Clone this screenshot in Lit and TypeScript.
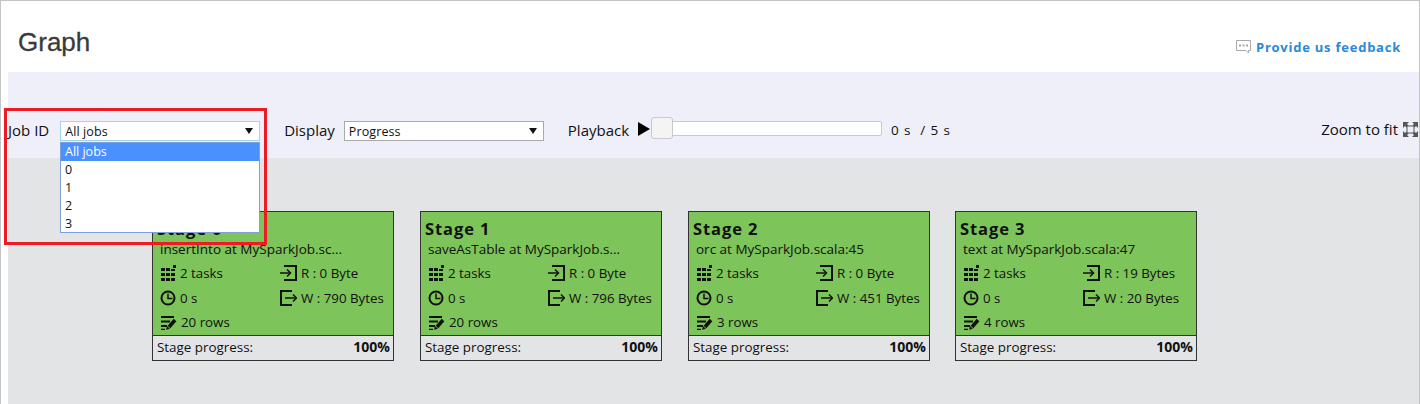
import { LitElement, html, css, svg } from 'lit';
import { customElement } from 'lit/decorators.js';
import { map } from 'lit/directives/map.js';

type Stage = { name: string; op: string; tasks: string; read: string; write: string; time: string; rows: string };

const stages: Stage[] = [
  { name: 'Stage 0', op: 'insertInto at MySparkJob.sc...', tasks: '2 tasks', read: 'R : 0 Byte', write: 'W : 790 Bytes', time: '0 s', rows: '20 rows' },
  { name: 'Stage 1', op: 'saveAsTable at MySparkJob.s...', tasks: '2 tasks', read: 'R : 0 Byte', write: 'W : 796 Bytes', time: '0 s', rows: '20 rows' },
  { name: 'Stage 2', op: 'orc at MySparkJob.scala:45', tasks: '2 tasks', read: 'R : 0 Byte', write: 'W : 451 Bytes', time: '0 s', rows: '3 rows' },
  { name: 'Stage 3', op: 'text at MySparkJob.scala:47', tasks: '2 tasks', read: 'R : 19 Bytes', write: 'W : 20 Bytes', time: '0 s', rows: '4 rows' },
];

const tasksIcon = svg`<svg class="icon" width="16" height="16" viewBox="0 0 16 16" fill="#111">
  <rect x="1" y="3" width="4" height="3"/><rect x="6" y="3" width="4" height="3"/><rect x="11" y="4" width="4" height="2"/>
  <rect x="1" y="8" width="4" height="3"/><rect x="6" y="8" width="4" height="3"/><rect x="11" y="8" width="4" height="3"/>
  <rect x="1" y="13" width="4" height="3"/><rect x="6" y="13" width="4" height="3"/><rect x="11" y="13" width="4" height="3"/>
  <rect x="13" y="0" width="3" height="3"/></svg>`;
const clockIcon = svg`<svg class="icon" width="16" height="16" viewBox="0 0 16 16" fill="none" stroke="#111">
  <circle cx="8" cy="8" r="6.500" stroke-width="2"/><path d="M8 3.500V8.500H12.500" stroke-width="1.500"/></svg>`;
const rowsIcon = svg`<svg class="icon" width="17" height="16" viewBox="0 0 17 16" fill="none" stroke="#111" stroke-width="2">
  <path d="M1 3H14M1 7.500H10M1 12H7"/><path d="M1 15.500H5" stroke-width="1.500"/><path d="M9 13L15 6" stroke-width="3.500"/><path d="M6.500 15.500L7 12.500L9.500 14.500Z" fill="#111" stroke-width="0.500"/></svg>`;
const readIcon = svg`<svg class="icon" width="17" height="16" viewBox="0 0 17 16" fill="none" stroke="#111" stroke-width="2">
  <path d="M4 1H16V15H4"/><path d="M0 8H10" stroke-width="1.500"/><path d="M7 4.500L10.500 8L7 11.500" stroke-width="1.500"/></svg>`;
const writeIcon = svg`<svg class="icon" width="17" height="16" viewBox="0 0 17 16" fill="none" stroke="#111" stroke-width="2">
  <path d="M12 1H1V15H12"/><path d="M5 8H16" stroke-width="1.500"/><path d="M13 4.500L16.500 8L13 11.500" stroke-width="1.500"/></svg>`;

@customElement('app-root')
export class AppRoot extends LitElement {
  static styles = css`
    :host {
      display: block;
      position: relative;
      height: 404px;
      box-sizing: border-box;
      overflow: hidden;
      border: 1px solid #c4c4c4;
      border-bottom: none;
      background: #fff;
      font-family: 'Open Sans', 'Noto Sans', sans-serif;
      color: #111;
    }
    .header {
      height: 71px;
      display: flex;
      justify-content: space-between;
      box-sizing: border-box;
      padding: 0 18px 0 17px;
    }
    h1 {
      margin: 25px 0 0;
      font: 400 26px/32px 'Liberation Sans', sans-serif;
      color: #3a3a3a;
      -webkit-text-stroke: 0.3px #3a3a3a;
    }
    .feedback {
      display: flex;
      align-items: center;
      gap: 5px;
      margin-top: 36px;
      height: 20px;
      font: 700 13px/20px 'Open Sans', sans-serif;
      letter-spacing: 0.76px;
      color: #2b88d8;
    }
    .main {
      margin-left: 7px;
    }
    .toolbar {
      height: 86px;
      box-sizing: border-box;
      padding: 48px 1px 0 0;
      background: #eeeff8;
      display: flex;
      align-items: flex-start;
      font-size: 15px;
      line-height: 20px;
    }
    .select {
      position: relative;
      box-sizing: border-box;
      width: 200px;
      height: 20px;
      margin-top: 1px;
      padding-left: 4px;
      background: #fff;
      border: 1px solid #a9a9a9;
      font-size: 12.500px;
      line-height: 19px;
      letter-spacing: 0.1px;
    }
    .select::after {
      content: '';
      position: absolute;
      right: 6px;
      top: 6px;
      border: 4px solid transparent;
      border-top: 6px solid #111;
      border-bottom: none;
    }
    .job-select {
      margin-left: 11px;
      border: 1px dashed #1ba1e2;
      outline: 1px solid #9fd5ee;
      outline-offset: -1px;
    }
    .display-label { margin-left: 24px; }
    .display-select { margin-left: 9px; }
    .playback-label { margin-left: 24px; }
    .play {
      margin: 2px 0 0 9px;
      border-left: 12px solid #000;
      border-top: 7.500px solid transparent;
      border-bottom: 7.500px solid transparent;
    }
    .slider {
      position: relative;
      margin: 1px 0 0 1px;
      width: 231px;
      height: 15px;
      box-sizing: border-box;
      background: #fff;
      border: 1px solid #c8c8d0;
      border-radius: 2px;
    }
    .thumb {
      position: absolute;
      left: -1px;
      top: -5px;
      width: 22px;
      height: 22px;
      box-sizing: border-box;
      background: #f4f4f4;
      border: 1px solid #c8c8d0;
      border-radius: 3px;
    }
    .time {
      margin-left: 9px;
      font-size: 13.500px;
      letter-spacing: 0.9px;
      white-space: pre;
    }
    .zoom {
      margin: -1px 0 0 auto;
      display: flex;
      align-items: center;
      gap: 5px;
    }
    .canvas {
      height: 246px;
      box-sizing: border-box;
      padding: 53px 0 0 144px;
      background: #e3e4e6;
      display: flex;
      gap: 26px;
    }
    .card {
      box-sizing: border-box;
      width: 242px;
      height: 150px;
      border: 1px solid #333;
      background: #7dc45a;
      display: flex;
      flex-direction: column;
    }
    .card:last-child { margin-left: -1px; }
    .body { flex: 1; padding: 6px 4px 0 4px; }
    .name { font-size: 16.500px; line-height: 22px; font-weight: 700; letter-spacing: 0.9px; }
    .op { font-size: 13.500px; line-height: 18px; padding-left: 3px; white-space: nowrap; }
    .stats {
      display: grid;
      grid-template-columns: 120px 1fr;
      grid-auto-rows: 24.500px;
      margin-top: 3px;
      padding-left: 3px;
      font-size: 13.300px;
      line-height: 20px;
      align-items: center;
    }
    .stat { display: flex; align-items: center; gap: 4px; white-space: nowrap; }
    .icon { flex: none; }
    .footer {
      height: 25px;
      box-sizing: border-box;
      border-top: 1px solid #333;
      background: #e3e4e6;
      display: flex;
      justify-content: space-between;
      padding: 0 3px 0 4px;
      font-size: 13.400px;
      line-height: 22px;
    }
    .footer b { font-size: 14px; }
    .dropdown {
      position: absolute;
      left: 59px;
      top: 141px;
      width: 200px;
      height: 91px;
      box-sizing: border-box;
      background: #fff;
      border: 1px solid #7f9fdb;
      font-size: 12.500px;
      line-height: 18px;
    }
    .option { height: 18px; padding-left: 4px; }
    .option.selected { background: #4a90ff; color: #fff; }
    .highlight {
      position: absolute;
      left: 3px;
      top: 107px;
      width: 263px;
      height: 137px;
      box-sizing: border-box;
      border: 3px solid #ed1c24;
      pointer-events: none;
    }
  `;

  #renderCard(s: Stage) {
    return html`
      <div class="card">
        <div class="body">
          <div class="name">${s.name}</div>
          <div class="op">${s.op}</div>
          <div class="stats">
            <div class="stat">${tasksIcon}${s.tasks}</div>
            <div class="stat">${readIcon}${s.read}</div>
            <div class="stat">${clockIcon}${s.time}</div>
            <div class="stat">${writeIcon}${s.write}</div>
            <div class="stat">${rowsIcon}${s.rows}</div>
          </div>
        </div>
        <div class="footer"><span>Stage progress:</span><b>100%</b></div>
      </div>
    `;
  }

  render() {
    return html`
      <div class="header">
        <h1>Graph</h1>
        <div class="feedback">
          <svg width="15" height="14" viewBox="0 0 15 14" fill="none">
            <path d="M0.500 0.500H14.500V10.500H12.500V13L10 10.500H0.500Z" fill="#fff" stroke="#a8a8a8"/>
            <path d="M3 5.500H5M6.500 5.500H8.500M10 5.500H12" stroke="#a8a8a8" stroke-width="2"/>
          </svg>
          Provide us feedback
        </div>
      </div>
      <div class="main">
        <div class="toolbar">
          <span>Job ID</span>
          <div class="select job-select">All jobs</div>
          <span class="display-label">Display</span>
          <div class="select display-select">Progress</div>
          <span class="playback-label">Playback</span>
          <div class="play"></div>
          <div class="slider"><div class="thumb"></div></div>
          <span class="time">0 s  / 5 s</span>
          <div class="zoom">
            Zoom to fit
            <svg width="15" height="15" viewBox="0 0 15 15" fill="#555">
              <path d="M0 0H6L4 2L5.500 3.500H9.500L11 2L9 0H15V6L13 4L11.500 5.500V9.500L13 11L15 9V15H9L11 13L9.500 11.500H5.500L4 13L6 15H0V9L2 11L3.500 9.500V5.500L2 4L0 6Z"/>
              <rect x="4.500" y="4.500" width="6" height="6" fill="#eeeff8"/>
            </svg>
          </div>
        </div>
        <div class="canvas">
          ${map(stages, (s) => this.#renderCard(s))}
        </div>
      </div>
      <div class="dropdown">
        <div class="option selected">All jobs</div>
        ${map(['0', '1', '2', '3'], (o) => html`<div class="option">${o}</div>`)}
      </div>
      <div class="highlight"></div>
    `;
  }
}
